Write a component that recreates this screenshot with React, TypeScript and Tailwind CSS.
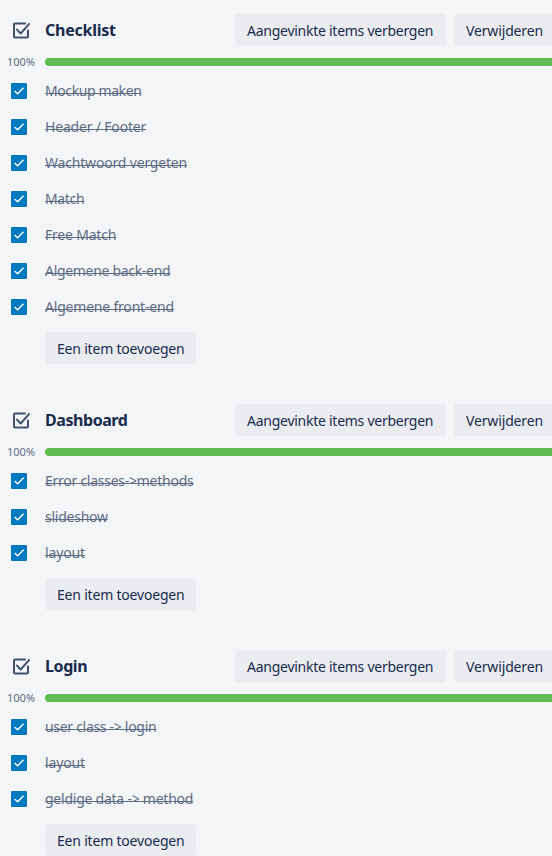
type Item = { text: string; tracking: string };
type Checklist = { title: string; tracking: string; items: Item[] };

const checklists: Checklist[] = [
  {
    title: 'Checklist',
    tracking: 'tracking-[-0.25px]',
    items: [
      { text: 'Mockup maken', tracking: 'tracking-[-0.4px]' },
      { text: 'Header / Footer', tracking: 'tracking-[-0.18px]' },
      { text: 'Wachtwoord vergeten', tracking: 'tracking-[-0.18px]' },
      { text: 'Match', tracking: 'tracking-[-0.35px]' },
      { text: 'Free Match', tracking: 'tracking-[-0.2px]' },
      { text: 'Algemene back-end', tracking: 'tracking-[-0.31px]' },
      { text: 'Algemene front-end', tracking: 'tracking-[-0.2px]' },
    ],
  },
  {
    title: 'Dashboard',
    tracking: 'tracking-[-0.44px]',
    items: [
      { text: 'Error classes->methods', tracking: 'tracking-[-0.26px]' },
      { text: 'slideshow', tracking: 'tracking-[-0.25px]' },
      { text: 'layout', tracking: 'tracking-[-0.15px]' },
    ],
  },
  {
    title: 'Login',
    tracking: 'tracking-[-0.4px]',
    items: [
      { text: 'user class -> login', tracking: 'tracking-[-0.3px]' },
      { text: 'layout', tracking: 'tracking-[-0.15px]' },
      { text: 'geldige data -> method', tracking: 'tracking-[-0.24px]' },
    ],
  },
];

function ChecklistIcon() {
  return (
    <svg className="ml-[9px] h-6 w-6 shrink-0 text-[#42526e]" viewBox="0 -0.6 24 24" fill="currentColor" aria-hidden="true">
      <path
        fillRule="evenodd"
        clipRule="evenodd"
        d="M6 4C4.89543 4 4 4.89543 4 6V18C4 19.1046 4.89543 20 6 20H18C19.1046 20 20 19.1046 20 18V12C20 11.4477 19.5523 11 19 11C18.4477 11 18 11.4477 18 12V18H6V6L16 6C16.5523 6 17 5.55228 17 5C17 4.44772 16.5523 4 16 4H6ZM8.73534 10.3223C8.36105 9.91618 7.72841 9.89038 7.3223 10.2647C6.91619 10.639 6.89039 11.2716 7.26467 11.6777L10.8678 15.5871C11.0628 15.7986 11.3382 15.9178 11.6259 15.9151C11.9135 15.9124 12.1866 15.7881 12.3777 15.5729L20.7475 6.16381C21.1144 5.75107 21.0773 5.11901 20.6645 4.75208C20.2518 4.38516 19.6197 4.42232 19.2528 4.83506L11.6162 13.4459L8.73534 10.3223Z"
      />
    </svg>
  );
}

function Checkbox() {
  return (
    <span className="ml-[11px] flex h-4 w-4 shrink-0 items-center justify-center rounded-[1px] bg-[#0079bf]">
      <svg className="h-4 w-4" viewBox="0 0 16 16" fill="none" stroke="white" strokeWidth="1.4" aria-hidden="true">
        <path d="M3.6 8 6.6 10.8 12.6 4.8" />
      </svg>
    </span>
  );
}

function ChecklistSection({ title, tracking, items }: Checklist) {
  return (
    <section className="mb-10">
      <header className="flex h-8 items-center">
        <ChecklistIcon />
        <h3 className={`ml-3 grow text-[16px] leading-5 font-bold ${tracking}`}>{title}</h3>
        <button className="mr-2 h-8 w-[211px] shrink-0 rounded-[3px] bg-[#ebecf0] pt-0.5 pl-3 text-left tracking-[-0.26px] whitespace-nowrap">
          Aangevinkte items verbergen
        </button>
        <button className="-mr-[3px] h-8 w-[101px] shrink-0 rounded-[3px] bg-[#ebecf0] pt-0.5 pl-3 text-left tracking-[-0.15px] whitespace-nowrap">
          Verwijderen
        </button>
      </header>
      <div className="mt-3 flex h-2 items-center">
        <span className="w-[45px] shrink-0 pl-[7px] text-[11px] leading-[10px] text-[#5e6c84]">100%</span>
        <div className="h-2 grow rounded-l-[4px] bg-[#61bd4f]" />
      </div>
      <ul className="mt-[7px]">
        {items.map((item) => (
          <li key={item.text} className="flex h-9 items-center">
            <Checkbox />
            <span
              className={`ml-[18px] leading-5 whitespace-nowrap text-[#5e6c84] underline decoration-1 underline-offset-[-3px] [text-decoration-skip-ink:none] ${item.tracking}`}
            >
              {item.text}
            </span>
          </li>
        ))}
      </ul>
      <button className="mt-[7px] ml-[45px] block h-8 w-[151px] rounded-[3px] bg-[#ebecf0] pt-0.5 pl-3 text-left tracking-[-0.2px] whitespace-nowrap">
        Een item toevoegen
      </button>
    </section>
  );
}

export default function App() {
  return (
    <main className="h-[856px] overflow-hidden bg-[#f4f5f7] pt-[14px] font-['Noto_Sans',sans-serif] text-[14px] leading-5 text-[#172b4d]">
      {checklists.map((checklist) => (
        <ChecklistSection key={checklist.title} {...checklist} />
      ))}
    </main>
  );
}
